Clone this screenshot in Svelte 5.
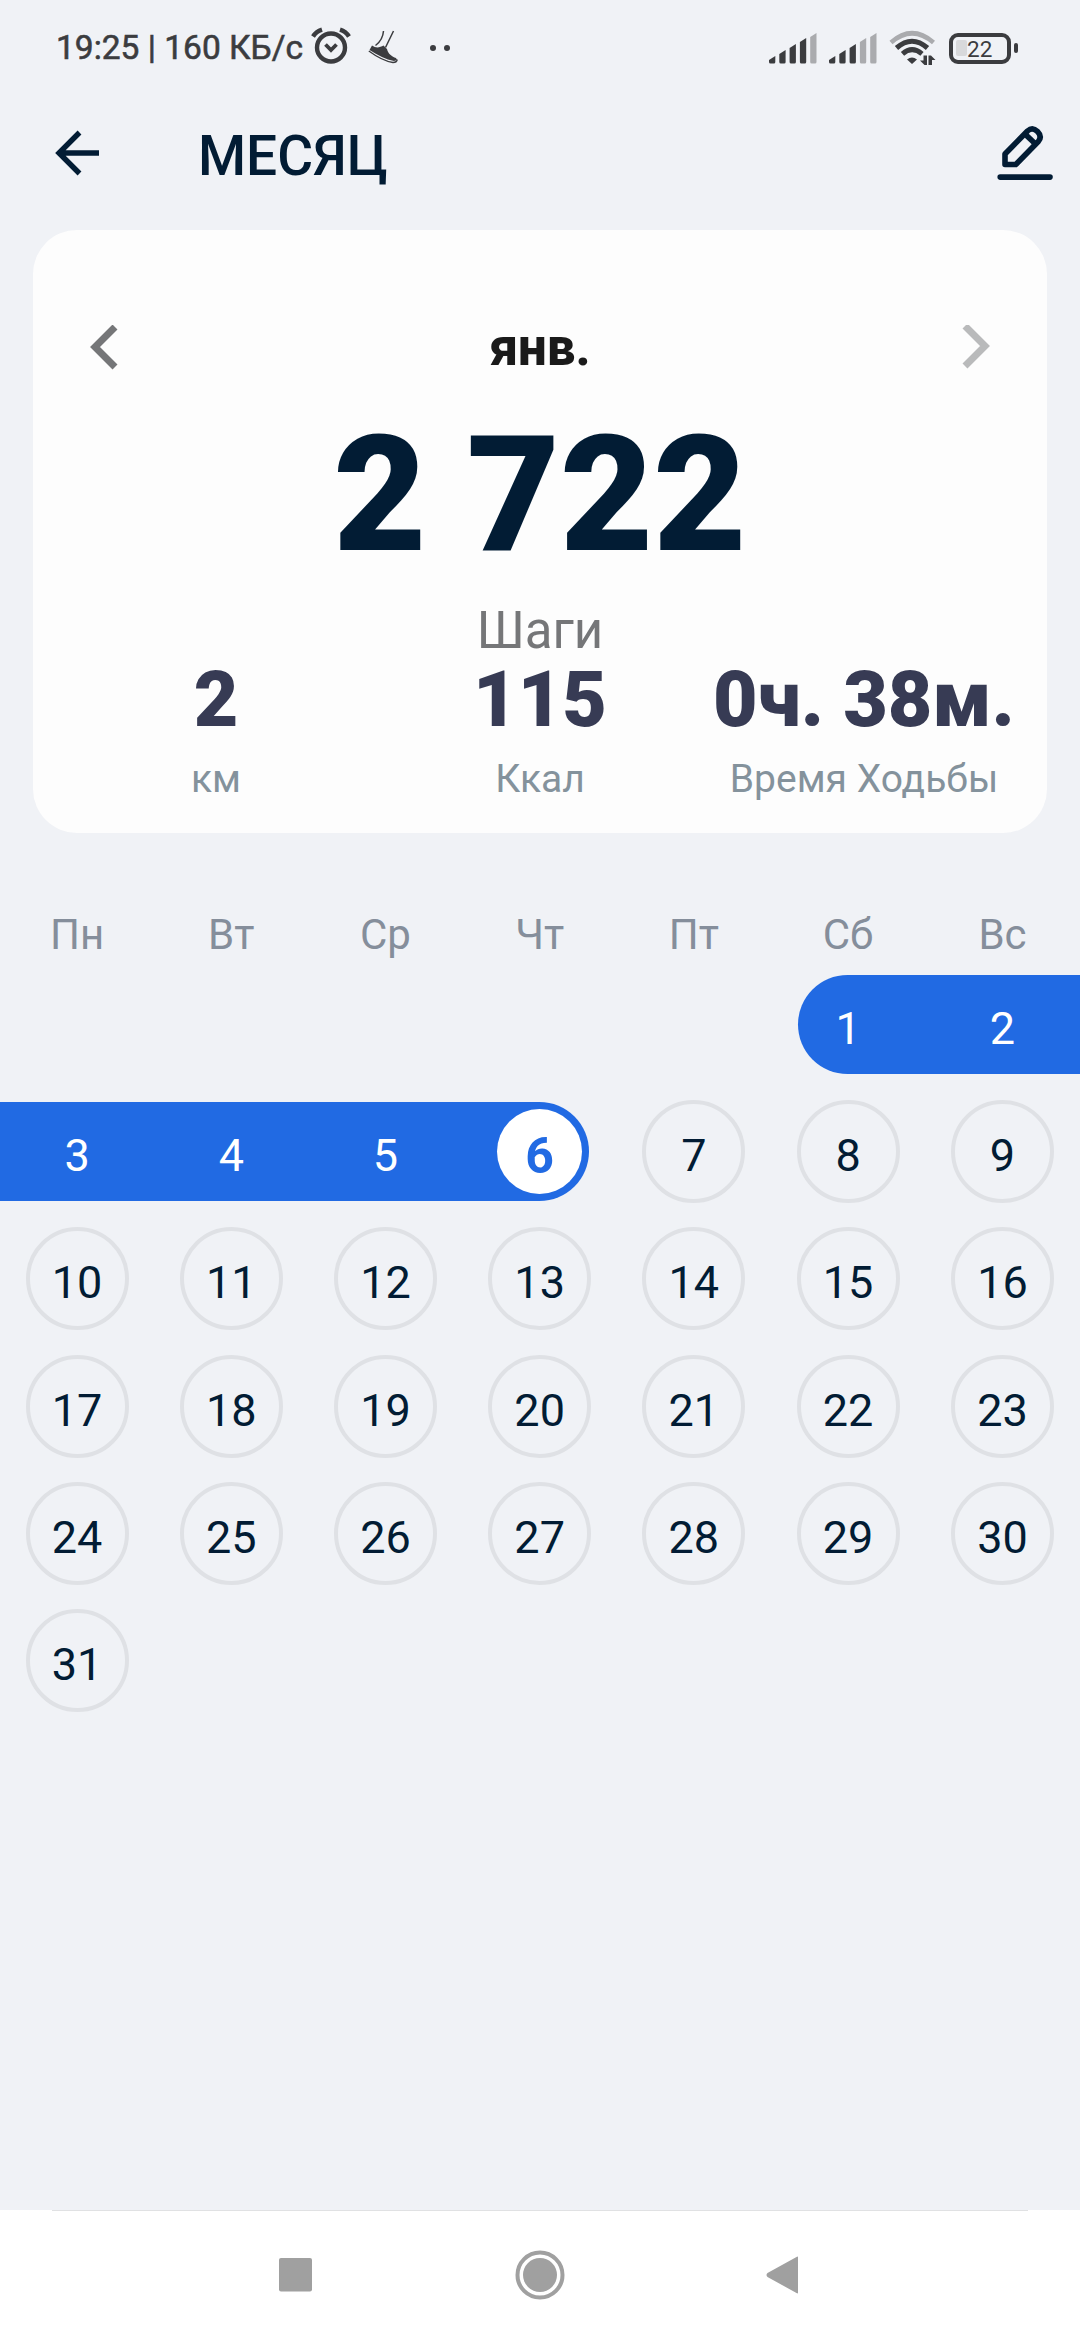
<script lang="ts">
	type Day = {
		n: number;
		done?: boolean;
		start?: boolean;
		end?: boolean;
		today?: boolean;
	};

	const weekdays = ['Пн', 'Вт', 'Ср', 'Чт', 'Пт', 'Сб', 'Вс'];
	const stats = [
		{ value: '2', label: 'км' },
		{ value: '115', label: 'Ккал' },
		{ value: '0ч. 38м.', label: 'Время Ходьбы' }
	];

	const firstWeekday = 5;
	const daysInMonth = 31;
	const today = 6;

	function buildWeeks() {
		const cells: (Day | null)[] = Array(firstWeekday).fill(null);
		for (let n = 1; n <= daysInMonth; n++) {
			cells.push({ n, done: n <= today, start: n === 1, end: n === today, today: n === today });
		}
		const weeks: (Day | null)[][] = [];
		for (let i = 0; i < cells.length; i += 7) {
			weeks.push(cells.slice(i, i + 7));
		}
		return weeks;
	}

	const weeks = buildWeeks();
	const bars = [8, 14, 20, 26, 31];
	const signals = [4, 3];
</script>

<div class="screen">
	<div class="status-bar">
		<span class="clock">19:25 | 160 КБ/с</span>
		<svg class="alarm" width="40" height="38" viewBox="0 0 40 38" fill="none" stroke="#3b3c3f">
			<circle cx="20" cy="20.5" r="14" stroke-width="4.4" />
			<path d="M2 9.5 Q5 4.5 11 2.6M38 9.5 Q35 4.5 29 2.6" stroke-width="4.4" />
			<path d="M14.5 17.5l5.5 5.5 5.5-5.5" stroke-width="3.8" />
		</svg>
		<svg class="shoe" width="31" height="34" viewBox="0 0 31 34">
			<path d="M15.5 1C15 8 11.5 12.5 7.5 15.5M25.5 1L17.5 17.5" fill="none" stroke="#3b3c3f" stroke-width="1.5" />
			<path d="M4 15.5C8 18.5 12 17.5 15.5 15.5L19 19C20 24 24 26.5 28 28L29 30 26 31C18 29.5 10 25.500 1.5 20Z" fill="#3b3c3f" />
			<path d="M.8 21C9 27 18 31.5 25 32.5 28 32.5 29 31 29.3 29.5" fill="none" stroke="#3b3c3f" stroke-width="1.3" />
		</svg>
		<span class="dots"><i></i><i></i></span>

		<div class="indicators">
			{#each signals as level}
				<svg width="48" height="32" viewBox="0 0 48 32">
					{#each bars as h, i}
						<path
							d="M{i * 10.3} {32 - h + 4}l6.3-4V30q0 1.5-1.5 1.5H{i * 10.3 + 1.5}q-1.5 0-1.5-1.5z"
							fill={i < level ? '#3b3c3f' : '#aaabae'}
						/>
					{/each}
				</svg>
			{/each}
			<svg width="48" height="36" viewBox="0 0 48 36" fill="none" stroke="#3b3c3f" stroke-width="5">
				<path d="M2 12.5Q23 -6 44.5 12.5" stroke="#aaabae" stroke-width="4.6" />
				<path d="M7.5 18Q23 4.5 38.5 18" />
				<path d="M13.5 23.8Q23 15.5 33 23.8" />
				<path d="M18 29.5Q23 25.5 28 29.5L23 34z" fill="#3b3c3f" stroke="none" />
				<path d="M34.500 25.5h3.5v9.500h-2.500l-4.500-4.500h3.5zM39.5 35V25.5h2.500l4.500 4.500h-3.5v5z" fill="#3b3c3f" stroke="none" />
			</svg>
			<div class="battery"><span class="charge"></span><span class="percent">22</span></div>
			<span class="nub"></span>
		</div>
	</div>

	<header>
		<svg width="46" height="46" viewBox="0 0 46 46" fill="none" stroke="#021c34" stroke-width="5.4">
			<path d="M25.5 2.5L5 23l20.5 20.5M5 23h40" />
		</svg>
		<h1>МЕСЯЦ</h1>
		<svg class="edit" width="58" height="56" viewBox="996 124.5 58 56" fill="none" stroke="#021c34" stroke-width="5.6" stroke-linejoin="round">
			<path d="M1005 164V153.5L1027.5 130.5Q1032.5 126 1037.5 131 1042.5 136 1038.3 141L1015.8 164Z" />
			<path d="M1025.5 134L1035.5 143.5" />
			<path d="M1000.2 176.6H1050" stroke-linecap="round" />
		</svg>
	</header>

	<section class="card">
		<div class="month">
			<svg width="28" height="46" viewBox="0 0 28 46" fill="none" stroke="#757678" stroke-width="7">
				<path d="M25 2L5 22l20 20" />
			</svg>
			<h2>янв.</h2>
			<svg width="28" height="46" viewBox="0 0 28 46" fill="none" stroke="#b9babb" stroke-width="7">
				<path d="M3 1l20 20-20 20" />
			</svg>
		</div>
		<div class="steps">2 722</div>
		<div class="steps-label">Шаги</div>
		<div class="stats">
			{#each stats as stat}
				<div class="stat">
					<strong>{stat.value}</strong>
					<span>{stat.label}</span>
				</div>
			{/each}
		</div>
	</section>

	<section class="calendar">
		<div class="week weekdays">
			{#each weekdays as name}
				<span>{name}</span>
			{/each}
		</div>
		{#each weeks as week}
			<div class="week">
				{#each week as day}
					{#if day}
						<div class="cell" class:done={day.done} class:start={day.start} class:end={day.end}>
							<span class="day" class:today={day.today}>{day.n}</span>
						</div>
					{:else}
						<div></div>
					{/if}
				{/each}
			</div>
		{/each}
	</section>

	<nav>
		<svg width="33" height="34" viewBox="0 0 33 34"><rect width="33" height="33.5" rx="2" fill="#a0a0a0" /></svg>
		<svg width="50" height="50" viewBox="0 0 50 50">
			<circle cx="25" cy="25" r="22.5" fill="none" stroke="#a0a0a0" stroke-width="4" />
			<circle cx="25" cy="25" r="17" fill="#a0a0a0" />
		</svg>
		<svg width="33" height="38" viewBox="0 0 33 38"><path d="M32 1.5v35q0 1.5-1.5 .5L1.5 21q-2-2 0-4L30.5 1q1.5-1 1.5 .5z" fill="#a0a0a0" /></svg>
	</nav>
</div>

<style>
	:global(body) {
		margin: 0;
		background: #f0f2f6;
	}

	.screen {
		display: flex;
		flex-direction: column;
		width: 1080px;
		height: 2340px;
		overflow: hidden;
		background: #f0f2f6;
		color: #021c34;
		font-family: Roboto, sans-serif;
	}

	.status-bar {
		display: flex;
		align-items: center;
		box-sizing: border-box;
		height: 96px;
		padding: 0 62px 0 56px;
		color: #3b3c3f;
	}

	.clock {
		width: 255px;
		font-size: 33.5px;
		line-height: 40px;
		white-space: nowrap;
		-webkit-text-stroke: 0.6px #3b3c3f;
	}

	.alarm {
		margin-top: -4px;
	}

	.shoe {
		margin-left: 17px;
		margin-top: -2px;
	}

	.dots {
		display: flex;
		gap: 8px;
		margin-left: 31px;
	}

	.dots i {
		width: 6px;
		height: 6px;
		border-radius: 50%;
		background: #3b3c3f;
	}

	.indicators {
		display: flex;
		align-items: center;
		gap: 12px;
		margin-left: auto;
	}

	.battery {
		display: flex;
		align-items: center;
		box-sizing: border-box;
		width: 62px;
		height: 31px;
		padding-left: 3px;
		border: 4px solid #3b3c3f;
		border-radius: 9px;
	}

	.charge {
		width: 11px;
		height: 16px;
		border-radius: 2px;
		background: #d8d9db;
	}

	.percent {
		margin-top: 2px;
		font-size: 22.5px;
		line-height: 24px;
	}

	.nub {
		width: 4px;
		height: 10px;
		margin-left: -9px;
		border-radius: 2px;
		background: #3b3c3f;
	}

	header {
		display: flex;
		align-items: center;
		height: 114px;
		margin-bottom: 20px;
		padding: 0 26px 0 54px;
	}

	h1 {
		margin: 6px 0 0 98px;
		font-size: 55px;
		font-weight: 500;
		line-height: 64px;
	}

	.edit {
		margin-left: auto;
	}

	.card {
		box-sizing: border-box;
		height: 603px;
		margin: 0 33px;
		padding-top: 88px;
		border-radius: 44px;
		background: #fdfdfd;
		text-align: center;
	}

	.month {
		display: flex;
		align-items: center;
		justify-content: space-between;
		height: 60px;
		padding: 0 57px;
	}

	h2 {
		margin: 0;
		color: #1a1a1a;
		font-size: 51px;
		font-weight: 800;
		line-height: 62px;
	}

	.steps {
		margin-top: 37px;
		font-size: 161px;
		font-weight: 900;
		line-height: 160px;
	}

	.steps-label {
		margin-top: 27px;
		color: #757678;
		font-size: 51px;
		line-height: 58px;
	}

	.stats {
		display: grid;
		grid-template-columns: repeat(3, 324px);
		justify-content: center;
	}

	.stat {
		display: flex;
		flex-direction: column;
		align-items: center;
		gap: 14px;
		white-space: nowrap;
	}

	.stat strong {
		color: #373b54;
		font-size: 77px;
		font-weight: 900;
		line-height: 80px;
	}

	.stat span {
		color: #84929c;
		font-size: 39px;
		line-height: 50px;
	}

	.calendar {
		flex: 1;
		padding-top: 77px;
	}

	.week {
		display: grid;
		grid-template-columns: repeat(6, 154.2px) 154.8px;
		height: 127.2px;
	}

	.weekdays {
		height: 51px;
		color: #858e9b;
		font-size: 42px;
		line-height: 50px;
		text-align: center;
	}

	.cell {
		display: flex;
		align-items: center;
		justify-content: center;
		height: 99px;
		margin-top: 14px;
	}

	.day {
		box-sizing: border-box;
		flex: none;
		width: 103px;
		height: 103px;
		padding-top: 4px;
		border: 4px solid #dfe1e5;
		border-radius: 50%;
		font-size: 45px;
		line-height: 95px;
		text-align: center;
	}

	.done {
		background: #216ae3;
		color: #fff;
	}

	.done .day {
		border-color: transparent;
	}

	.start {
		margin-left: 27.5px;
		padding-right: 27.5px;
		border-radius: 50px 0 0 50px;
	}

	.end {
		margin-right: 27.5px;
		padding-left: 27.5px;
		border-radius: 0 50px 50px 0;
	}

	.done .today {
		width: 85px;
		height: 85px;
		border: 0;
		background: #fff;
		color: #216ae3;
		font-size: 50px;
		font-weight: 700;
		line-height: 86px;
	}

	nav {
		display: flex;
		align-items: center;
		justify-content: center;
		gap: 201px;
		position: relative;
		height: 130px;
		background: #fff;
	}

	nav svg:first-child {
		margin-right: 2px;
		margin-left: -2px;
	}

	nav::before {
		content: '';
		position: absolute;
		top: 0;
		left: 52px;
		right: 52px;
		height: 1px;
		background: #e0e1e3;
	}
</style>
